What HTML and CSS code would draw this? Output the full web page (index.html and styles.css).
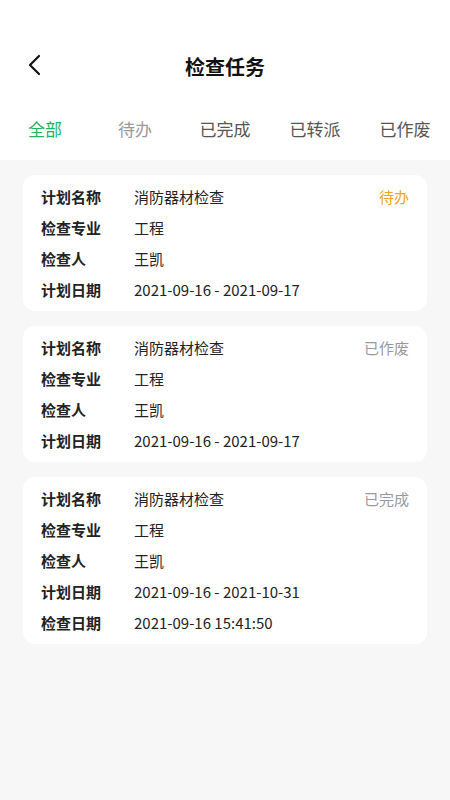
FILE: index.html
```html
<!DOCTYPE html>
<html lang="zh-CN">
<head>
    <meta charset="UTF-8">
    <meta name="viewport" content="width=device-width, initial-scale=1.0">
    <title>检查任务</title>
    <link rel="stylesheet" href="styles.css">
</head>
<body>
    <header class="top">
        <div class="navbar">
            <a class="back" href="#">
                <svg width="20" height="24" viewBox="0 0 20 24"><path d="M12 3 L3 12 L12 21" fill="none" stroke="#111" stroke-width="2.2" stroke-linecap="round" stroke-linejoin="round"/></svg>
            </a>
            <h1>检查任务</h1>
        </div>
        <nav class="tabs">
            <span class="tab active">全部</span>
            <span class="tab muted">待办</span>
            <span class="tab">已完成</span>
            <span class="tab">已转派</span>
            <span class="tab">已作废</span>
        </nav>
    </header>

    <main class="list">
        <div class="card">
            <div class="row"><span class="label">计划名称</span><span class="value">消防器材检查</span><span class="status pending">待办</span></div>
            <div class="row"><span class="label">检查专业</span><span class="value">工程</span></div>
            <div class="row"><span class="label">检查人</span><span class="value">王凯</span></div>
            <div class="row"><span class="label">计划日期</span><span class="value">2021-09-16 - 2021-09-17</span></div>
        </div>

        <div class="card">
            <div class="row"><span class="label">计划名称</span><span class="value">消防器材检查</span><span class="status">已作废</span></div>
            <div class="row"><span class="label">检查专业</span><span class="value">工程</span></div>
            <div class="row"><span class="label">检查人</span><span class="value">王凯</span></div>
            <div class="row"><span class="label">计划日期</span><span class="value">2021-09-16 - 2021-09-17</span></div>
        </div>

        <div class="card">
            <div class="row"><span class="label">计划名称</span><span class="value">消防器材检查</span><span class="status">已完成</span></div>
            <div class="row"><span class="label">检查专业</span><span class="value">工程</span></div>
            <div class="row"><span class="label">检查人</span><span class="value">王凯</span></div>
            <div class="row"><span class="label">计划日期</span><span class="value">2021-09-16 - 2021-10-31</span></div>
            <div class="row"><span class="label">检查日期</span><span class="value">2021-09-16 15:41:50</span></div>
        </div>
    </main>
</body>
</html>
```

FILE: styles.css
```css
body {
    margin: 0;
    font-family: "Noto Sans CJK SC", "Noto Sans", sans-serif;
    background-color: #f7f7f7;
    min-height: 800px;
}

.top {
    background: #fff;
    padding-top: 44px;
}

.navbar {
    height: 44px;
    display: flex;
    align-items: center;
    justify-content: center;
    position: relative;
}

.back {
    position: absolute;
    left: 27px;
    top: 9px;
    display: flex;
}

.navbar h1 {
    margin: 0;
    font-size: 20px;
    font-weight: bold;
    color: #111;
}

.tabs {
    display: flex;
    height: 64px;
    padding-top: 8px;
    align-items: center;
}

.tab {
    flex: 1;
    text-align: center;
    font-size: 17px;
    color: #555;
}

.tab.active {
    color: #22b35e;
}

.tab.muted {
    color: #999;
}

.list {
    padding: 15px 23px;
}

.card {
    background: #fff;
    border-radius: 12px;
    padding: 6px 18px;
    margin-bottom: 15px;
}

.row {
    display: flex;
    align-items: center;
    height: 31px;
    font-size: 15px;
}

.label {
    width: 93px;
    font-weight: bold;
    color: #222;
}

.value {
    flex: 1;
    color: #222;
}

.status {
    color: #999;
}

.status.pending {
    color: #f0a326;
}
```
